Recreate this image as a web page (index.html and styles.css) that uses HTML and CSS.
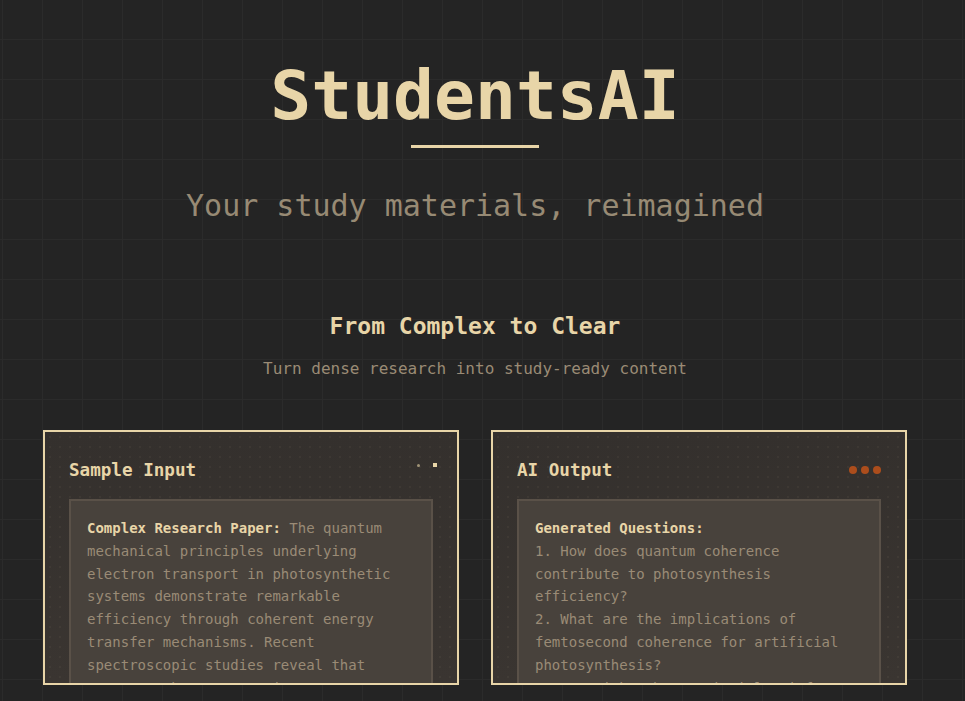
FILE: index.html
```html
<!DOCTYPE html>
<html lang="en">
<head>
<meta charset="utf-8">
<title>StudentsAI</title>
<link rel="stylesheet" href="styles.css">
</head>
<body>
<main class="page">
  <header class="hero">
    <h1 class="brand">StudentsAI</h1>
    <div class="brand-rule"></div>
    <p class="tagline">Your study materials, reimagined</p>
  </header>
  <section class="demo">
    <h2 class="demo-title">From Complex to Clear</h2>
    <p class="demo-sub">Turn dense research into study-ready content</p>
    <div class="cards">
      <article class="card">
        <div class="card-head">
          <h3 class="card-title">Sample Input</h3>
          <div class="pulse"><span class="pulse-dot dim"></span><span class="pulse-dot sq"></span></div>
        </div>
        <div class="card-body">
          <strong>Complex Research Paper:</strong> The quantum mechanical principles underlying electron transport in photosynthetic systems demonstrate remarkable efficiency through coherent energy transfer mechanisms. Recent spectroscopic studies reveal that quantum coherence persists at physiological temperatures in light-harvesting complexes.
        </div>
      </article>
      <article class="card">
        <div class="card-head">
          <h3 class="card-title">AI Output</h3>
          <div class="typing"><span class="typing-dot"></span><span class="typing-dot"></span><span class="typing-dot"></span></div>
        </div>
        <div class="card-body">
          <strong>Generated Questions:</strong><br>
          1. How does quantum coherence contribute to photosynthesis efficiency?<br>
          2. What are the implications of femtosecond coherence for artificial photosynthesis?<br>
          3. How might these principles inform solar cell design?
        </div>
      </article>
    </div>
  </section>
</main>
</body>
</html>
```

FILE: styles.css
```css
html, body {
  margin: 0;
  padding: 0;
}

body {
  background-color: #242424;
  background-image:
    linear-gradient(to right, #2b2b2b 1px, transparent 1px),
    linear-gradient(to bottom, #2b2b2b 1px, transparent 1px);
  background-size: 40px 40px;
  background-position: 2px 39px;
  font-family: "DejaVu Sans Mono", "Liberation Mono", monospace;
  color: #e8d5a8;
  min-height: 701px;
  overflow: hidden;
}

.page {
  max-width: 950px;
}

.hero {
  display: flex;
  flex-direction: column;
  align-items: center;
  padding-top: 62px;
}

.brand {
  margin: 0;
  font-size: 68px;
  line-height: 1;
  font-weight: 700;
  color: #e8d5a8;
}

.brand-rule {
  width: 128px;
  height: 3px;
  margin-top: 15px;
  background: #e8d5a8;
}

.tagline {
  margin: 40px 0 0;
  font-size: 30px;
  line-height: 36px;
  color: #978a74;
}

.demo {
  display: flex;
  flex-direction: column;
  align-items: center;
  padding-top: 88px;
}

.demo-title {
  margin: 0;
  font-size: 23px;
  line-height: 28px;
  font-weight: 700;
  color: #e8d5a8;
}

.demo-sub {
  margin: 19px 0 0;
  font-size: 16px;
  line-height: 19px;
  color: #9a8b75;
}

.cards {
  display: grid;
  grid-template-columns: 416px 416px;
  gap: 32px;
  margin-top: 52px;
  width: 864px;
}

.card {
  box-sizing: border-box;
  height: 255px;
  overflow: hidden;
  border: 2px solid #e8d5a8;
  padding: 24px;
  background-color: #35302c;
  background-image:
    radial-gradient(circle, rgba(232, 213, 168, 0.045) 1px, transparent 1.2px),
    linear-gradient(to bottom, #34302d, #3a3531);
  background-size: 10px 10px, 100% 100%;
}

.card-head {
  display: flex;
  align-items: center;
  justify-content: space-between;
  height: 27px;
  padding-top: 1px;
  margin-bottom: 15px;
}

.card-title {
  margin: 0;
  font-size: 17.6px;
  line-height: 27px;
  font-weight: 700;
  color: #e8d5a8;
}

.pulse {
  display: flex;
  align-items: center;
  gap: 13px;
  margin-right: -4px;
  margin-top: -11px;
}

.pulse-dot {
  display: block;
  width: 4px;
  height: 4px;
  background: #e8d5a8;
}

.pulse-dot.dim {
  width: 3px;
  height: 3px;
  border-radius: 50%;
  opacity: 0.6;
}

.typing {
  display: flex;
  gap: 4px;
  margin-top: -1px;
}

.typing-dot {
  display: block;
  width: 8px;
  height: 8px;
  border-radius: 50%;
  background: #ac4d1c;
}

.card-body {
  border: 2px solid #5a5148;
  background: #48423c;
  padding: 16px;
  font-size: 14px;
  line-height: 22.8px;
  color: #9a8b76;
}

.card-body strong {
  font-weight: 700;
  color: #e8d5a8;
}
```
